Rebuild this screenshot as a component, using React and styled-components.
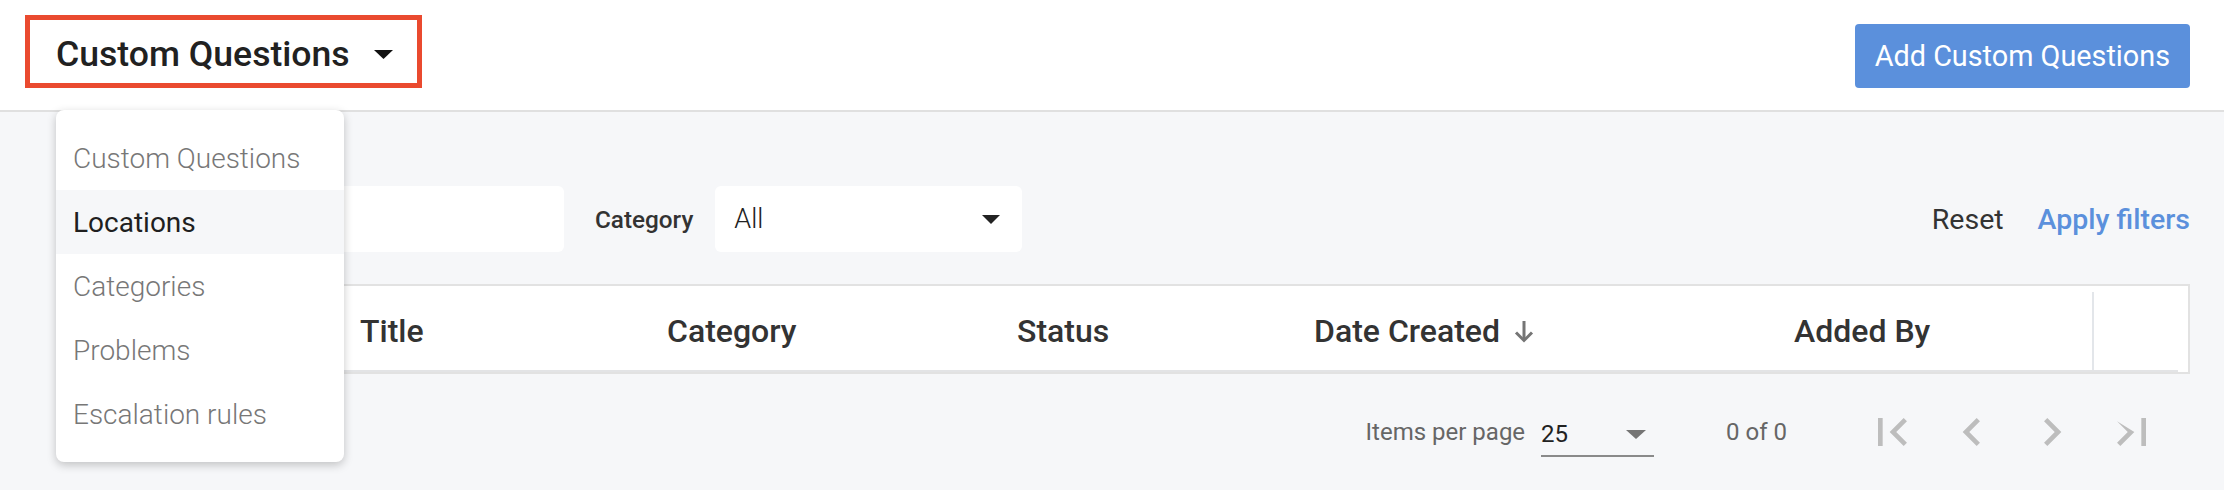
import React from "react";
import styled, { createGlobalStyle } from "styled-components";

const Global = createGlobalStyle`
  html, body { margin: 0; padding: 0; }
  body {
    background: #f6f7f9;
    font-family: Roboto, "Noto Sans", "Liberation Sans", sans-serif;
    color: #222;
  }
  * { box-sizing: border-box; }
`;

const Page = styled.div`
  position: relative;
  width: 2224px;
  min-height: 490px;
  background: #f6f7f9;
`;

const Header = styled.header`
  height: 112px;
  background: #fff;
  border-bottom: 2px solid #e0e0e0;
  padding: 0 34px 0 25px;
  display: flex;
  justify-content: space-between;
  align-items: flex-start;
`;

const TitleBox = styled.div`
  margin-top: 15px;
  width: 397px;
  height: 73px;
  border: 5px solid #ea4a2f;
  display: flex;
  align-items: center;
  padding: 6px 0 0 26px;
  gap: 24px;
`;

const Title = styled.h1`
  margin: 0;
  font-size: 35.6px;
  font-weight: 500;
  color: #212121;
  line-height: 1;
`;

const Caret = styled.svg`
  display: block;
  flex: none;
`;

const PrimaryButton = styled.button`
  margin-top: 24px;
  height: 64px;
  padding: 0 20px;
  border: none;
  border-radius: 4px;
  background: #5b90dc;
  color: #fff;
  font-family: Roboto, sans-serif;
  font-size: 28.8px;
  font-weight: 400;
`;

const Menu = styled.ul`
  position: absolute;
  left: 56px;
  top: 110px;
  width: 288px;
  margin: 0;
  padding: 16px 0;
  list-style: none;
  background: #fff;
  border-radius: 8px;
  box-shadow: 0 3px 10px rgba(0, 0, 0, 0.22);
  z-index: 5;
`;

const MenuItem = styled.li`
  height: 64px;
  display: flex;
  align-items: center;
  padding-left: 17px;
  font-size: 28px;
  font-weight: ${(p) => (p.$active ? 400 : 300)};
  color: ${(p) => (p.$active ? "#1f1f1f" : "#777")};
  background: ${(p) => (p.$active ? "#f6f7f9" : "transparent")};
`;

const Main = styled.main`
  padding: 74px 34px 0 90px;
`;

const FilterRow = styled.div`
  display: flex;
  align-items: center;
  height: 66px;
`;

const SearchBox = styled.div`
  width: 474px;
  height: 66px;
  background: #fff;
  border-radius: 6px;
`;

const FilterLabel = styled.span`
  margin: 0 22px 0 31px;
  font-size: 24.3px;
  font-weight: 500;
  color: #333;
`;

const SelectBox = styled.div`
  width: 307px;
  height: 66px;
  background: #fff;
  border-radius: 6px;
  display: flex;
  align-items: center;
  justify-content: space-between;
  padding: 0 22px 0 19px;
  font-size: 27px;
  font-weight: 300;
  color: #222;
`;

const Spacer = styled.div`
  flex: 1;
`;

const TextAction = styled.span`
  font-size: 28.5px;
  font-weight: ${(p) => (p.$primary ? 500 : 400)};
  color: ${(p) => (p.$primary ? "#5b90dc" : "#333")};
  margin-left: ${(p) => (p.$primary ? "34px" : "0")};
`;

const Table = styled.div`
  margin-top: 32px;
  background: #fff;
  border: 2px solid #e2e2e2;
`;

const HeaderRow = styled.div`
  width: calc(100% - 10px);
  height: 86px;
  border-bottom: 2px solid #e3e4e6;
  display: grid;
  grid-template-columns: 244px 307px 350px 297px 480px 322px 1fr;
`;

const HeadCell = styled.div`
  display: flex;
  align-items: center;
  gap: 14px;
  padding: 6px 0 0 24px;
  font-size: 32px;
  font-weight: 500;
  color: #333;
`;

const ActionsCell = styled.div`
  margin-top: 6px;
  border-left: 2px solid #e3e6ea;
`;

const Pagination = styled.div`
  margin-top: 30px;
  height: 56px;
  display: flex;
  justify-content: flex-end;
  align-items: center;
  padding-right: 30px;
`;

const PageText = styled.span`
  font-size: 24px;
  color: #666;
  margin-right: ${(p) => p.$mr || "0"};
`;

const PageSelect = styled.div`
  width: 113px;
  height: 46px;
  border-bottom: 2px solid #8a8a8a;
  display: flex;
  align-items: center;
  justify-content: space-between;
  padding: 2px 8px 0 0;
  margin: 4px 72px 0 16px;
  font-size: 24px;
  color: #222;
`;

const IconButton = styled.span`
  width: 56px;
  height: 56px;
  display: flex;
  margin-left: ${(p) => p.$ml || "24px"};
`;

const ICONS = {
  first: "M18.41 16.59L13.82 12l4.59-4.59L17 6l-6 6 6 6zM6 6h2v12H6z",
  prev: "M15.41 7.41L14 6l-6 6 6 6 1.41-1.41L10.83 12z",
  next: "M10 6L8.59 7.41 13.17 12l-4.58 4.59L10 18l6-6z",
  last: "M5.59 7.41L10.18 12l-4.59 4.59L7 18l6-6zM16 6h2v12h-2z",
};

const NavIcon = ({ name, ml }) => (
  <IconButton $ml={ml}>
    <svg width="56" height="56" viewBox="0 0 24 24">
      <path d={ICONS[name]} fill="#bdbdbd" />
    </svg>
  </IconButton>
);

const Triangle = ({ w, h, color }) => (
  <Caret width={w} height={h} viewBox={`0 0 ${w} ${h}`}>
    <polygon points={`0,0 ${w},0 ${w / 2},${h}`} fill={color} />
  </Caret>
);

const SortArrow = () => (
  <Caret width="20" height="23" viewBox="0 0 20 23">
    <path d="M10 1v19" stroke="#757575" strokeWidth="3" fill="none" />
    <path d="M2 12.5l8 8 8-8" stroke="#757575" strokeWidth="3" fill="none" />
  </Caret>
);

const menuItems = ["Custom Questions", "Locations", "Categories", "Problems", "Escalation rules"];

export default function App() {
  return (
    <>
      <Global />
      <Page>
        <Header>
          <TitleBox>
            <Title>Custom Questions</Title>
            <Triangle w={19} h={9} color="#111" />
          </TitleBox>
          <PrimaryButton>Add Custom Questions</PrimaryButton>
        </Header>

        <Menu>
          {menuItems.map((m) => (
            <MenuItem key={m} $active={m === "Locations"}>
              {m}
            </MenuItem>
          ))}
        </Menu>

        <Main>
          <FilterRow>
            <SearchBox />
            <FilterLabel>Category</FilterLabel>
            <SelectBox>
              <span>All</span>
              <Triangle w={18} h={9} color="#222" />
            </SelectBox>
            <Spacer />
            <TextAction>Reset</TextAction>
            <TextAction $primary>Apply filters</TextAction>
          </FilterRow>

          <Table>
            <HeaderRow>
              <HeadCell />
              <HeadCell>Title</HeadCell>
              <HeadCell>Category</HeadCell>
              <HeadCell>Status</HeadCell>
              <HeadCell>
                Date Created <SortArrow />
              </HeadCell>
              <HeadCell>Added By</HeadCell>
              <ActionsCell />
            </HeaderRow>
          </Table>

          <Pagination>
            <PageText>Items per page</PageText>
            <PageSelect>
              <span>25</span>
              <Triangle w={20} h={9} color="#757575" />
            </PageSelect>
            <PageText $mr="77px">0 of 0</PageText>
            <NavIcon name="first" ml="0" />
            <NavIcon name="prev" />
            <NavIcon name="next" />
            <NavIcon name="last" />
          </Pagination>
        </Main>
      </Page>
    </>
  );
}
